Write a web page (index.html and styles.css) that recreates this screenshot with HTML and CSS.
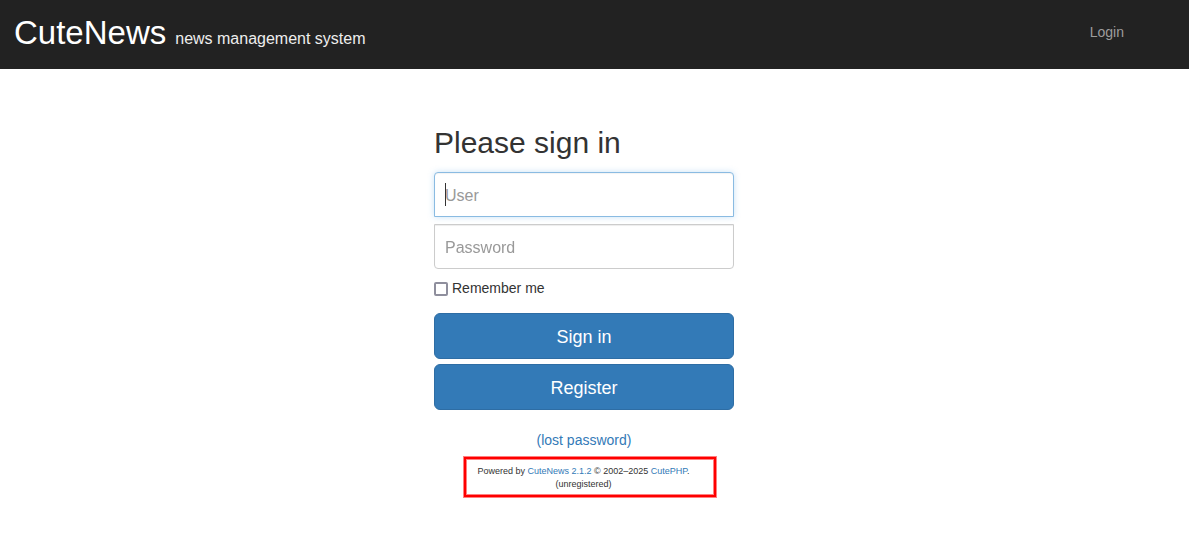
FILE: index.html
```html
<!DOCTYPE html>
<html lang="en">
<head>
<meta charset="utf-8">
<meta name="viewport" content="width=device-width, initial-scale=1">
<title>CuteNews</title>
<link rel="stylesheet" href="styles.css">
</head>
<body>
<header class="navbar">
  <div class="brand"><span class="brand-name">CuteNews</span><small class="brand-tagline">news management system</small></div>
  <nav><a class="nav-link" href="#">Login</a></nav>
</header>
<main class="container">
  <form class="form-signin">
    <h2 class="form-heading">Please sign in</h2>
    <div class="field field-first">
      <input class="form-control form-control-user" type="text" placeholder="User" aria-label="User" autofocus>
      <span class="caret" aria-hidden="true"></span>
    </div>
    <div class="field">
      <input class="form-control form-control-password" type="password" placeholder="Password" aria-label="Password">
    </div>
    <label class="remember"><input class="remember-box" type="checkbox">Remember me</label>
    <button class="btn" type="submit">Sign in</button>
    <button class="btn" type="button">Register</button>
    <a class="lost" href="#">(lost password)</a>
  </form>
  <footer class="powered">
    <div>Powered by <a href="#">CuteNews 2.1.2</a> © 2002–2025 <a href="#">CutePHP</a>.</div>
    <div>(unregistered)</div>
  </footer>
</main>
</body>
</html>
```
FILE: styles.css
```css
* { box-sizing: border-box; }

body {
  margin: 0;
  background: #fff;
  color: #333;
  font: 14px/20px "Liberation Sans", Arial, sans-serif;
}

a { color: #337ab7; text-decoration: none; }

.navbar {
  display: flex;
  justify-content: space-between;
  align-items: flex-start;
  padding: 13px 65px 16px 14px;
  background: #222;
}

.brand { display: flex; align-items: baseline; gap: 9px; color: #fff; }
.brand-name { font-size: 33px; line-height: 40px; }
.brand-tagline { color: #eee; font-size: 16px; }
.nav-link { display: block; padding-top: 9px; color: #9d9d9d; }

.container {
  display: flex;
  flex-direction: column;
  align-items: center;
  padding: 57px 21px 40px 0;
}

.form-signin { display: flex; flex-direction: column; width: 100%; max-width: 300px; }
.form-heading { margin: 0 0 13px; font-size: 30px; line-height: 33px; font-weight: 400; }

.field { position: relative; margin-bottom: 10px; }
.field-first { margin-bottom: 7px; }

.form-control {
  display: block;
  width: 100%;
  height: 45px;
  padding: 11px 10px 9px;
  border: 1px solid #ccc;
  background: #fff;
  box-shadow: inset 0 1px 1px rgba(0, 0, 0, 0.075);
  color: #555;
  font: 16px/23px "Liberation Sans", Arial, sans-serif;
  caret-color: transparent;
  outline: 0;
}
.form-control::placeholder { color: #999; opacity: 1; }
.form-control-user { border-radius: 4px 4px 0 0; }
.form-control-password { border-radius: 0 0 4px 4px; }
.form-control-user, .form-control:focus {
  border-color: #8abbe2;
  box-shadow: inset 0 1px 1px rgba(0, 0, 0, 0.05), 0 0 6px rgba(102, 175, 233, 0.35);
}

.caret { position: absolute; top: 11px; left: 11px; width: 1px; height: 23px; background: #333; }

.remember { display: flex; align-items: center; gap: 4px; margin-bottom: 15px; line-height: 19px; }
.remember-box {
  appearance: none;
  width: 14px;
  height: 14px;
  margin: 1px 0 0;
  border: 2px solid #8f8f9d;
  border-radius: 2px;
  background: #fff;
}
.remember-box:checked { background: #337ab7; }

.btn {
  height: 46px;
  margin-bottom: 5px;
  padding: 11px 16px 9px;
  border: 1px solid #2e6da4;
  border-radius: 6px;
  background: #337ab7;
  color: #fff;
  font: 18px/24px "Liberation Sans", Arial, sans-serif;
  cursor: pointer;
}

.lost { align-self: center; margin-top: 15px; }

.powered {
  margin: 7px 0 0 12px;
  padding: 6px 24px 4px 11px;
  border: 2px solid #f00;
  box-shadow: 0 0 0 1px #ff8080, inset 0 0 0 1px #ff8080;
  font-size: 9px;
  line-height: 13px;
  text-align: center;
}
```
